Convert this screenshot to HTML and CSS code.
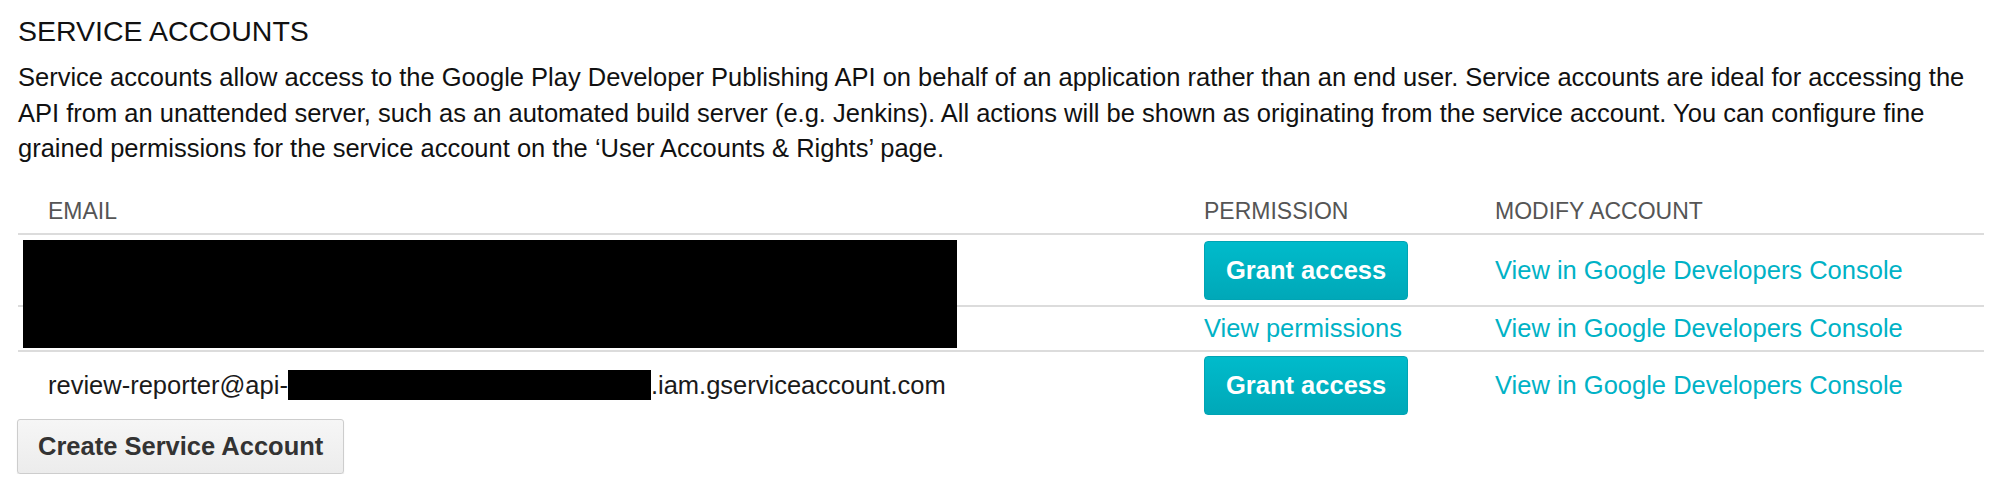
FILE: index.html
```html
<!DOCTYPE html>
<html lang="en">
<head>
    <meta charset="UTF-8">
    <title>Service Accounts</title>
    <link rel="stylesheet" href="styles.css">
</head>
<body>
    <div class="page">
        <h2 class="section-title">SERVICE ACCOUNTS</h2>
        <p class="section-desc">Service accounts allow access to the Google Play Developer Publishing API on behalf of an application rather than an end user. Service accounts are ideal for accessing the API from an unattended server, such as an automated build server (e.g. Jenkins). All actions will be shown as originating from the service account. You can configure fine grained permissions for the service account on the ‘User Accounts &amp; Rights’ page.</p>

        <table class="accounts">
            <colgroup>
                <col class="col-email">
                <col class="col-perm">
                <col>
            </colgroup>
            <thead>
                <tr>
                    <th>EMAIL</th>
                    <th>PERMISSION</th>
                    <th>MODIFY ACCOUNT</th>
                </tr>
            </thead>
            <tbody>
                <tr class="row-btn">
                    <td class="email-cell"><span class="redact-block"></span></td>
                    <td><button class="btn-grant">Grant access</button></td>
                    <td><a class="link" href="#">View in Google Developers Console</a></td>
                </tr>
                <tr class="row-text">
                    <td class="email-cell"></td>
                    <td><a class="link" href="#">View permissions</a></td>
                    <td><a class="link" href="#">View in Google Developers Console</a></td>
                </tr>
                <tr class="row-btn row-last">
                    <td class="email-cell">review-reporter@api-<span class="redact-inline"></span>.iam.gserviceaccount.com</td>
                    <td><button class="btn-grant">Grant access</button></td>
                    <td><a class="link" href="#">View in Google Developers Console</a></td>
                </tr>
            </tbody>
        </table>

        <button class="btn-create">Create Service Account</button>
    </div>
</body>
</html>
```

FILE: styles.css
```css
/* service accounts panel */
body {
    margin: 0;
    background: #fff;
    color: #111;
    font-family: 'Liberation Sans', Arial, Helvetica, sans-serif;
}

.page {
    padding: 14px 16px 0 18px;
}

.section-title {
    margin: 0;
    font-size: 28.5px;
    line-height: 34px;
    font-weight: normal;
    color: #111;
}

.section-desc {
    margin: 12px -14px 0 0;
    font-size: 25.5px;
    line-height: 35.5px;
    color: #111;
}

.accounts {
    width: 100%;
    border-collapse: separate;
    border-spacing: 0;
    font-size: 25.5px;
}

.col-email {
    width: 1156px;
}

.col-perm {
    width: 291px;
}

.accounts th {
    padding: 30px 0 8px 30px;
    font-size: 23px;
    line-height: 28px;
    font-weight: normal;
    text-align: left;
    color: #555;
    border-bottom: 2px solid #dcdcdc;
}

.accounts td {
    padding: 0 0 0 30px;
    line-height: 30px;
    vertical-align: middle;
    border-bottom: 2px solid #dcdcdc;
    white-space: nowrap;
}

.row-btn td {
    padding-top: 6px;
    padding-bottom: 5px;
}

.row-text td {
    padding-top: 6px;
    padding-bottom: 7px;
}

.row-last td {
    padding-top: 4px;
    padding-bottom: 4px;
    border-bottom: none;
}

.email-cell {
    position: relative;
    color: #1a1a1a;
}

.redact-block {
    position: absolute;
    left: 5px;
    top: 5px;
    width: 934px;
    height: 108px;
    background: #000;
    z-index: 1;
}

.redact-inline {
    display: inline-block;
    width: 363px;
    height: 30px;
    background: #000;
    vertical-align: -6px;
}

.link {
    color: #00b2c6;
    text-decoration: none;
}

.btn-grant {
    height: 59px;
    padding: 0 21px;
    border: 1px solid #00a4b4;
    border-radius: 4px;
    background: linear-gradient(#00bbcb, #00a8b8);
    color: #fff;
    font-family: inherit;
    font-size: 25.5px;
    font-weight: bold;
    cursor: pointer;
}

.btn-create {
    margin-left: -1px;
    height: 55px;
    padding: 0 20px;
    border: 1px solid #cdcdcd;
    border-radius: 3px;
    background: linear-gradient(#f6f6f6, #ececec);
    box-shadow: 0 1px 1px rgba(0, 0, 0, 0.12);
    color: #333;
    font-family: inherit;
    font-size: 25.5px;
    font-weight: bold;
    cursor: pointer;
}
```
